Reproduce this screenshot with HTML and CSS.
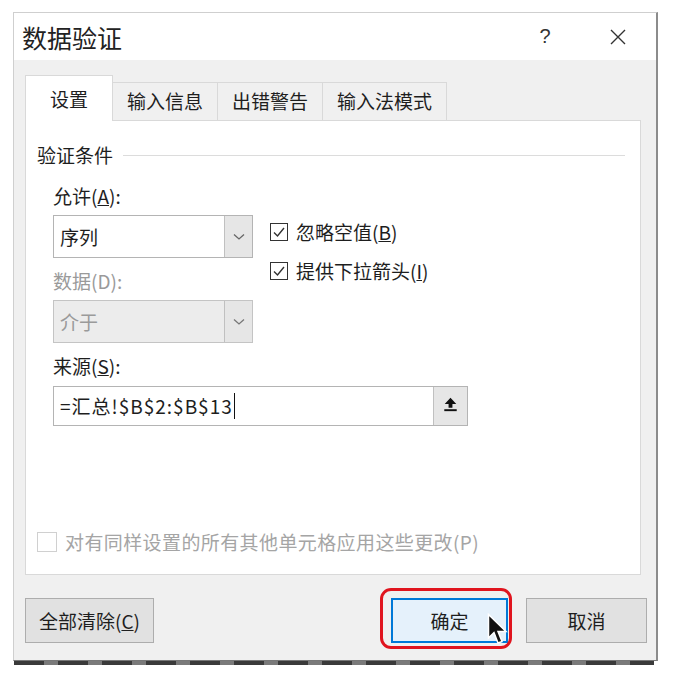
FILE: index.html
```html
<!DOCTYPE html>
<html>

<head>
    <meta charset="utf-8">
    <title>数据验证</title>
    <link rel="stylesheet" href="styles.css">
</head>

<body>
    <div class="dialog">
        <div class="titleBar">
            <span class="title">数据验证</span>
            <span class="help">?</span>
            <span class="close">
                <svg width="18" height="18" viewBox="0 0 18 18">
                    <path d="M2 2 L16 16 M16 2 L2 16" stroke="#333" stroke-width="1.4" fill="none" />
                </svg>
            </span>
        </div>
        <div class="dialogBody">
            <div class="tabs">
                <div class="tab active">设置</div>
                <div class="tab">输入信息</div>
                <div class="tab">出错警告</div>
                <div class="tab">输入法模式</div>
            </div>
            <div class="panel">
                <div class="groupHead">
                    <span>验证条件</span>
                    <span class="rule"></span>
                </div>
                <div class="criteria">
                    <div class="leftCol">
                        <div class="label">允许(<u>A</u>):</div>
                        <div class="select">
                            <span class="value">序列</span>
                            <span class="dropBtn">
                                <svg width="12" height="8" viewBox="0 0 12 8">
                                    <path d="M1 1.5 L6 6 L11 1.5" stroke="#666" stroke-width="1.3" fill="none" />
                                </svg>
                            </span>
                        </div>
                        <div class="label muted">数据(D):</div>
                        <div class="select disabled">
                            <span class="value">介于</span>
                            <span class="dropBtn">
                                <svg width="12" height="8" viewBox="0 0 12 8">
                                    <path d="M1 1.5 L6 6 L11 1.5" stroke="#777" stroke-width="1.3" fill="none" />
                                </svg>
                            </span>
                        </div>
                    </div>
                    <div class="checks">
                        <div class="check">
                            <span class="box">
                                <svg width="16" height="16" viewBox="0 0 16 16">
                                    <path d="M3 8.5 L6.5 12 L13 4" stroke="#333" stroke-width="1.4" fill="none" />
                                </svg>
                            </span>
                            <span>忽略空值(<u>B</u>)</span>
                        </div>
                        <div class="check">
                            <span class="box">
                                <svg width="16" height="16" viewBox="0 0 16 16">
                                    <path d="M3 8.5 L6.5 12 L13 4" stroke="#333" stroke-width="1.4" fill="none" />
                                </svg>
                            </span>
                            <span>提供下拉箭头(<u>I</u>)</span>
                        </div>
                    </div>
                </div>
                <div class="label sourceLabel">来源(<u>S</u>):</div>
                <div class="source">
                    <span class="sourceText">=汇总!$B$2:$B$13<span class="caret"></span></span>
                    <span class="pickBtn">
                        <svg width="15" height="15" viewBox="0 0 14 14">
                            <path d="M7 0.8 L12.4 6.6 L8.8 6.6 L8.8 10 L5.2 10 L5.2 6.6 L1.6 6.6 Z" fill="#111" />
                            <rect x="1.2" y="11.4" width="11.6" height="1.8" fill="#111" />
                        </svg>
                    </span>
                </div>
                <div class="applyAll">
                    <span class="box"></span>
                    <span>对有同样设置的所有其他单元格应用这些更改(P)</span>
                </div>
            </div>
            <div class="buttons">
                <div class="btn">全部清除(<u>C</u>)</div>
                <div class="spacer"></div>
                <div class="btn primary">
                    确定
                    <span class="highlight"></span>
                    <svg class="cursor" width="22" height="34" viewBox="0 0 22 34">
                        <path d="M1.5 1.5 L1.5 25 L7 19.5 L11 30 L15 28.5 L11 18.5 L19 18.5 Z" fill="#111" stroke="#fff" stroke-width="1.5" />
                    </svg>
                </div>
                <div class="btn">取消</div>
            </div>
        </div>
    </div>
    <div class="sheetEdge"></div>
</body>

</html>
```

FILE: styles.css
```css
body {
    margin: 0;
    background: #fff;
    font-family: "Noto Sans CJK SC", "Noto Sans", sans-serif;
    color: #1e1e1e;
}

.dialog {
    margin: 12px 0 0 13px;
    width: 642px;
    height: 647px;
    border: 1px solid #cfcfcf;
    border-right: 2px solid #8c8c8c;
    border-bottom: 1px solid #777;
    display: flex;
    flex-direction: column;
    background: #f0f0f0;
}

.titleBar {
    height: 47px;
    background: #fff;
    display: flex;
    align-items: center;
    padding-left: 8px;
}

.title {
    font-size: 25px;
    line-height: 30px;
    color: #222;
    flex: 1;
}

.help {
    font-family: "Liberation Sans", sans-serif;
    font-size: 20px;
    color: #333;
    width: 20px;
    margin-right: 54px;
    text-align: center;
}

.close {
    width: 18px;
    height: 18px;
    margin-right: 29px;
    display: flex;
}

.dialogBody {
    flex: 1;
    display: flex;
    flex-direction: column;
    padding: 15px 14px 0 11px;
}

.tabs {
    display: flex;
    align-items: flex-end;
    height: 45px;
}

.tab {
    height: 38px;
    line-height: 36px;
    font-size: 19px;
    text-align: center;
    background: #f0f0f0;
    border: 1px solid #d9d9d9;
    border-bottom: none;
    margin-left: -1px;
    width: 106px;
    box-sizing: border-box;
}

.tab:nth-child(4) {
    width: 125px;
}

.tab.active {
    width: 88px;
    height: 46px;
    line-height: 46px;
    background: #fff;
    margin-left: 0;
    margin-bottom: -1px;
    position: relative;
    z-index: 1;
}

.panel {
    background: #fff;
    border: 1px solid #d9d9d9;
    width: 616px;
    height: 455px;
    box-sizing: border-box;
    display: flex;
    flex-direction: column;
    padding: 22px 11px 20px 11px;
    font-size: 19px;
}

.groupHead {
    display: flex;
    align-items: center;
    line-height: 24px;
}

.rule {
    flex: 1;
    height: 1px;
    background: #dcdcdc;
    margin-left: 10px;
    margin-right: 4px;
}

.label {
    line-height: 24px;
}

.label.muted {
    color: #9a9a9a;
}

.criteria {
    display: flex;
    margin: 17px 0 0 16px;
    gap: 17px;
}

.leftCol {
    display: flex;
    flex-direction: column;
    width: 200px;
}

.select {
    margin-top: 7px;
    margin-bottom: 11px;
    height: 43px;
    border: 1px solid #b4b4b4;
    box-sizing: border-box;
    display: flex;
    background: #fff;
}

.select .value {
    flex: 1;
    line-height: 41px;
    padding-left: 6px;
}

.select.disabled {
    background: #ececec;
    border-color: #c4c4c4;
    margin-bottom: 0;
}

.select.disabled .value {
    color: #9a9a9a;
}

.dropBtn {
    width: 27px;
    background: #e6e6e6;
    border-left: 1px solid #c0c0c0;
    display: flex;
    align-items: center;
    justify-content: center;
}

.checks {
    display: flex;
    flex-direction: column;
    gap: 15px;
    padding-top: 36px;
}

.check {
    display: flex;
    align-items: center;
    gap: 8px;
    line-height: 24px;
}

.box {
    width: 18px;
    height: 18px;
    border: 1.5px solid #333;
    box-sizing: border-box;
    display: flex;
    align-items: center;
    justify-content: center;
    background: #fff;
}

.box svg {
    flex: none;
}

.sourceLabel {
    margin: 11px 0 0 16px;
}

.source {
    margin: 8px 0 0 16px;
    width: 415px;
    height: 40px;
    border: 1px solid #b4b4b4;
    box-sizing: border-box;
    display: flex;
}

.sourceText {
    flex: 1;
    line-height: 38px;
    padding-left: 6px;
    letter-spacing: 1px;
    display: flex;
    align-items: center;
}

.caret {
    width: 1.5px;
    height: 26px;
    background: #111;
    margin-left: 1px;
}

.pickBtn {
    width: 33px;
    background: #e6e6e6;
    border-left: 1px solid #c0c0c0;
    display: flex;
    align-items: center;
    justify-content: center;
    padding-bottom: 4px;
}

.applyAll {
    margin-top: auto;
    display: flex;
    align-items: center;
    gap: 8px;
    line-height: 24px;
    color: #a5a5a5;
    letter-spacing: 0.4px;
}

.applyAll .box {
    width: 20px;
    height: 20px;
    border: 1.5px solid #d0d0d0;
}

.buttons {
    display: flex;
    margin-top: 23px;
    margin-right: -5px;
}

.spacer {
    flex: 1;
}

.btn {
    height: 45px;
    line-height: 43px;
    font-size: 19px;
    text-align: center;
    background: #e1e1e1;
    border: 1px solid #adadad;
    box-sizing: border-box;
    width: 121px;
}

.btn:first-child {
    width: 129px;
}

.btn.primary {
    width: 117px;
    background: #e5f1fb;
    border: 2px solid #0078d7;
    line-height: 41px;
    margin-right: 18px;
    position: relative;
}

.highlight {
    position: absolute;
    left: -13px;
    top: -12px;
    right: -6px;
    bottom: -8px;
    border: 3px solid #e0141e;
    border-radius: 11px;
}

.cursor {
    position: absolute;
    left: 94px;
    top: 13px;
}

.sheetEdge {
    margin-left: 14px;
    width: 640px;
    height: 4px;
    background: repeating-linear-gradient(90deg, #3a3a3a 0, #3a3a3a 30px, #7a7a7a 30px, #7a7a7a 44px);
}
```
